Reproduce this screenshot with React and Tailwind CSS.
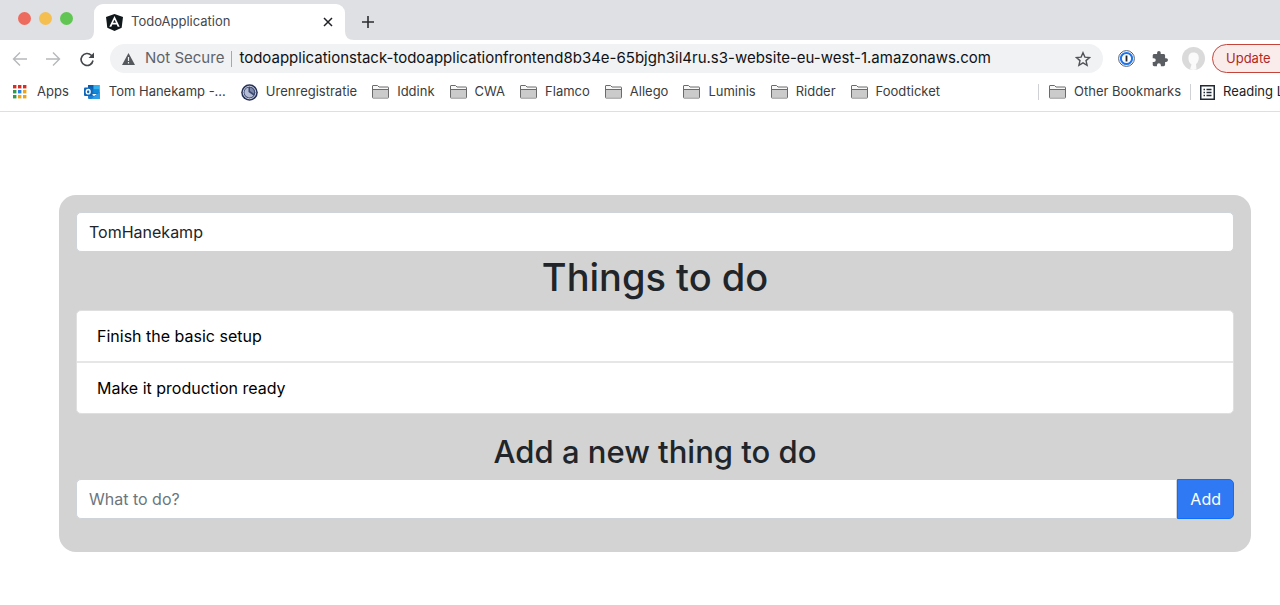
import React, { useState } from "react";

const FolderIcon = () => (
  <svg viewBox="0 0 17 14" className="w-[17px] h-3.5 shrink-0" aria-hidden="true">
    <path d="M.5 12.500v-11.500q0-.5.5-.5h4.500l1.500 1.500h9q.5 0 .5.500v10q0 .5-.5.500h-15q-.5 0-.5-.5z" fill="#f7f7f7" stroke="#6b6b6b" />
    <path d="M1 4.500h15v8h-15z" fill="#cbcbcb" />
    <path d="M.5 4.500h16" stroke="#6b6b6b" />
  </svg>
);

const AppsIcon = () => {
  const colors = ["#dc2b20", "#dc2b20", "#dc2b20", "#2f9b4c", "#2583e8", "#eaa51a", "#2f9b4c", "#eaa51a", "#eaa51a"];
  return (
    <svg viewBox="0 0 17 14" className="w-[17px] h-3.5 shrink-0" aria-hidden="true">
      {colors.map((color, i) => (
        <rect key={i} x={1 + (i % 3) * 5} y={Math.floor(i / 3) * 5} width="3.400" height="3.400" fill={color} />
      ))}
    </svg>
  );
};

const OutlookIcon = () => (
  <svg viewBox="0 0 17 16" className="w-[17px] h-4 shrink-0" aria-hidden="true">
    <path d="M4 1h11.500v9H4z" fill="#1177c9" />
    <path d="M4 1h5.500v4.500H4z" fill="#0a5cab" />
    <path d="M9.500 1h6v4.500h-6z" fill="#35b0ee" />
    <path d="M9.500 5.500h6V9h-6z" fill="#1488d8" />
    <path d="M4 8l6 4 6-4v6q0 1-1 1H5q-1 0-1-1z" fill="#1f7fd4" />
    <path d="M16 8v6q0 1-1 1H7z" fill="#2f9be6" />
    <rect y="3.500" width="8.500" height="8.500" rx="1" fill="#1066b8" />
    <ellipse cx="4.200" cy="7.700" rx="1.900" ry="2.200" fill="none" stroke="#fff" strokeWidth="1.400" />
  </svg>
);

const ClockIcon = () => (
  <svg viewBox="0 0 17 17" className="w-[17px] h-[17px] shrink-0" aria-hidden="true">
    <circle cx="8.500" cy="8.500" r="8.300" fill="#253056" />
    <circle cx="8.500" cy="8.500" r="6.300" fill="#3b4871" stroke="#dfe3ee" strokeWidth=".9" />
    <path d="M7.500 3.500v4.500l5 3.500a5 5 0 0 1-8.800-1.400 5 5 0 0 1 3.800-6.600z" fill="#b3bcd3" />
    <path d="M9 3.600a5 5 0 0 1 4 6.200L9 7z" fill="#7d89aa" />
  </svg>
);

const AngularIcon = () => (
  <svg viewBox="0 0 17 17" className="w-[17px] h-[17px] shrink-0" aria-hidden="true">
    <path d="M8.500 0L17 3l-1.300 10.700L8.500 17 1.300 13.700 0 3z" fill="#11181c" />
    <path d="M8.500 2L3.300 12.800h2l1-2.400h4.400l1 2.400h2zm0 3.700L10 8.800H7z" fill="#fff" />
  </svg>
);

const ReadingIcon = () => (
  <svg viewBox="0 0 15 15" className="w-[15px] h-[15px] shrink-0" fill="none" stroke="#1f2a36" aria-hidden="true">
    <rect x=".75" y=".75" width="13.500" height="13.500" strokeWidth="1.500" />
    <path d="M3.500 4.500h1.500m1.500 0h5M3.500 7.500h1.500m1.500 0h5M3.500 10.500h1.500m1.500 0h5" strokeWidth="1.300" />
  </svg>
);

const bookmarks = [
  { label: "Apps", icon: AppsIcon },
  { label: "Tom Hanekamp -...", icon: OutlookIcon },
  { label: "Urenregistratie", icon: ClockIcon },
  { label: "Iddink", icon: FolderIcon },
  { label: "CWA", icon: FolderIcon },
  { label: "Flamco", icon: FolderIcon },
  { label: "Allego", icon: FolderIcon },
  { label: "Luminis", icon: FolderIcon },
  { label: "Ridder", icon: FolderIcon },
  { label: "Foodticket", icon: FolderIcon },
];

const TabStrip = () => (
  <div className="flex h-10 bg-[#dfe0e4]">
    <div className="flex gap-2 pl-[18px] pt-3 w-[85px]">
      <button aria-label="Close window" className="w-[13px] h-[13px] rounded-full bg-[#ed6a5e]" />
      <button aria-label="Minimize window" className="w-[13px] h-[13px] rounded-full bg-[#f5bf4f]" />
      <button aria-label="Zoom window" className="w-[13px] h-[13px] rounded-full bg-[#61c554]" />
    </div>
    <svg viewBox="0 0 9 9" className="w-[9px] h-[9px] self-end" aria-hidden="true">
      <path d="M9 0v9H0q9 0 9-9z" fill="#fff" />
    </svg>
    <div className="flex items-center w-[251px] mt-1 pl-3 pr-3 rounded-t-[9px] bg-white">
      <AngularIcon />
      <span className="ml-2 text-[13px] text-[#45484c]">TodoApplication</span>
      <button aria-label="Close tab" className="ml-auto">
        <svg viewBox="0 0 10 10" className="w-2.5 h-2.5" stroke="#202124" strokeWidth="1.500">
          <path d="M1 1l8 8M9 1L1 9" />
        </svg>
      </button>
    </div>
    <svg viewBox="0 0 9 9" className="w-[9px] h-[9px] self-end" aria-hidden="true">
      <path d="M0 0v9h9q-9 0-9-9z" fill="#fff" />
    </svg>
    <button aria-label="New tab" className="ml-2 pt-1">
      <svg viewBox="0 0 12 12" className="w-3 h-3" stroke="#2b2d30" strokeWidth="1.600">
        <path d="M6 0v12M0 6h12" />
      </svg>
    </button>
  </div>
);

const Toolbar = ({ url, onUrlChange }) => (
  <div className="flex items-center h-[37px] pl-3">
    <button aria-label="Back">
      <svg viewBox="0 0 16 16" className="w-4 h-4" fill="none" stroke="#b6b8bb" strokeWidth="1.400">
        <path d="M15 8H2M8 1.500L1.500 8 8 14.500" />
      </svg>
    </button>
    <button aria-label="Forward" className="ml-[17px]">
      <svg viewBox="0 0 16 16" className="w-4 h-4" fill="none" stroke="#b6b8bb" strokeWidth="1.400">
        <path d="M1 8h13M8 1.500L14.500 8 8 14.500" />
      </svg>
    </button>
    <button aria-label="Reload" className="ml-[18px]">
      <svg viewBox="0 0 16 16" className="w-4 h-4" fill="none" stroke="#43464a" strokeWidth="1.600">
        <path d="M14 9.500A6 6 0 1 1 12.300 4.200L13.500 5.500" />
        <path d="M15 1.500V7H9.500z" fill="#43464a" stroke="none" />
      </svg>
    </button>
    <div className="flex items-center flex-1 h-[29px] ml-[15px] pl-3 pr-3 rounded-full bg-[#f1f2f4]">
      <svg viewBox="0 0 13 12" className="w-[13px] h-3 shrink-0" aria-hidden="true">
        <path d="M6.500 0L13 12H0z" fill="#55585c" />
        <path d="M6.500 4v4M6.500 9v1.500" stroke="#f1f2f4" strokeWidth="1.200" />
      </svg>
      <span className="ml-2.5 text-[15px] whitespace-nowrap text-[#5f6368]">Not Secure</span>
      <span className="w-px h-4 mx-[7px] shrink-0 bg-[#a5a8ac]" />
      <input
        aria-label="Address"
        value={url}
        onChange={(e) => onUrlChange(e.target.value)}
        className="flex-1 min-w-0 text-[15px] text-[#101113] bg-transparent outline-none"
      />
      <button aria-label="Bookmark this page">
        <svg viewBox="0 0 16 16" className="w-4 h-4" fill="none" stroke="#505357" strokeWidth="1.400">
          <path d="M8 1.700l1.900 4.400 4.700.4-3.600 3.100 1.100 4.700L8 11.800l-4.100 2.500L5 9.600 1.400 6.500l4.700-.4z" />
        </svg>
      </button>
    </div>
    <button aria-label="Password manager" className="ml-[15px]">
      <svg viewBox="0 0 17 17" className="w-[17px] h-[17px]" fill="none">
        <circle cx="8.500" cy="8.500" r="7.900" stroke="#555f6b" />
        <circle cx="8.500" cy="8.500" r="5.600" stroke="#1a73f0" strokeWidth="2" fill="#fff" />
        <path d="M8.500 5.500v6" stroke="#20242a" strokeWidth="1.800" />
      </svg>
    </button>
    <button aria-label="Extensions" className="ml-[17px]">
      <svg viewBox="1 1 22 22" className="w-4 h-4" fill="#5a5d61">
        <path d="M20.500 11H19V7c0-1.100-.9-2-2-2h-4V3.500a2.500 2.500 0 0 0-5 0V5H4c-1.100 0-2 .9-2 2v3.800h1.500a2.700 2.700 0 0 1 0 5.400H2V20c0 1.100.9 2 2 2h3.800v-1.500a2.700 2.700 0 0 1 5.400 0V22H17c1.100 0 2-.9 2-2v-4h1.500a2.500 2.500 0 0 0 0-5z" />
      </svg>
    </button>
    <button aria-label="Profile" className="ml-3.5">
      <svg viewBox="0 0 23 23" className="w-[23px] h-[23px]">
        <circle cx="11.500" cy="11.500" r="11.500" fill="#dadada" />
        <path d="M7 14.500C5.500 9 7 5.500 11.500 5.500S17.500 9 16.500 13q-.8 3-2.500 4l.5 5.500q-3 .8-6.500 0l1.500-5q-1.700-.8-2.500-3z" fill="#fafafa" />
      </svg>
    </button>
    <div className="w-[68px] ml-[7px] overflow-hidden">
      <button className="w-24 h-[29px] pl-[13px] text-left text-[13px] border border-[#c5443a] rounded-full bg-[#fbecec] text-[#b3261e]">
        Update
      </button>
    </div>
  </div>
);

const BookmarksBar = () => (
  <nav className="flex items-center h-[35px] pl-3 pb-1 border-b border-[#dedfe1] text-[13px] text-[#3a3c40] whitespace-nowrap">
    <div className="flex items-center gap-[15px]">
      {bookmarks.map((item) => {
        const Icon = item.icon;
        return (
          <a key={item.label} href="#" className="flex items-center gap-2">
            <Icon />
            {item.label}
          </a>
        );
      })}
    </div>
    <div className="flex items-center w-[242px] ml-auto overflow-hidden">
      <span className="w-px h-4 mr-2.5 shrink-0 bg-[#cfd1d4]" />
      <a href="#" className="flex items-center gap-2">
        <FolderIcon />
        Other Bookmarks
      </a>
      <span className="w-px h-4 mx-[9px] shrink-0 bg-[#cfd1d4]" />
      <button className="flex items-center gap-2 text-[#202124]">
        <ReadingIcon />
        Reading List
      </button>
    </div>
  </nav>
);

const TodoPage = () => {
  const [user, setUser] = useState("TomHanekamp");
  const [todos, setTodos] = useState(["Finish the basic setup", "Make it production ready"]);
  const [text, setText] = useState("");

  const addTodo = (e) => {
    e.preventDefault();
    if (!text.trim()) return;
    setTodos([...todos, text.trim()]);
    setText("");
  };

  return (
    <main className="pt-[83px] pl-[59px] pr-[29px] pb-12 text-[#212529]">
      <div className="p-[17px] pb-[33px] rounded-[17px] bg-[#d3d3d3]">
        <input
          aria-label="User name"
          value={user}
          onChange={(e) => setUser(e.target.value)}
          className="block w-full h-10 px-3 text-base border border-[#ced4da] rounded-[5px] bg-white outline-none"
        />
        <h1 className="mt-px mb-2 text-[38px] leading-[49px] font-medium text-center">Things to do</h1>
        <ul className="border border-[#dfdfdf] rounded-[5px] bg-white text-black divide-y-2 divide-[#e6e6e6]">
          {todos.map((todo, i) => (
            <li key={i} className="px-5 py-[13px] text-base">{todo}</li>
          ))}
        </ul>
        <h2 className="mt-[18px] mb-2 text-[31px] leading-[39px] font-medium text-center">Add a new thing to do</h2>
        <form onSubmit={addTodo} className="flex">
          <input
            aria-label="What to do?"
            placeholder="What to do?"
            value={text}
            onChange={(e) => setText(e.target.value)}
            className="flex-1 min-w-0 h-10 px-3 text-base border border-[#ced4da] rounded-l-[5px] bg-white outline-none placeholder:text-[#6c757d]"
          />
          <button type="submit" className="h-10 px-3 text-base border border-[#0d6efd] rounded-r-[5px] bg-[#3079f5] text-white">
            Add
          </button>
        </form>
      </div>
    </main>
  );
};

const App = () => {
  const [url, setUrl] = useState(
    "todoapplicationstack-todoapplicationfrontend8b34e-65bjgh3il4ru.s3-website-eu-west-1.amazonaws.com"
  );

  return (
    <div className="min-h-screen overflow-x-hidden bg-white font-['Inter','Liberation_Sans',sans-serif]">
      <header>
        <TabStrip />
        <Toolbar url={url} onUrlChange={setUrl} />
        <BookmarksBar />
      </header>
      <TodoPage />
    </div>
  );
};

export default App;
